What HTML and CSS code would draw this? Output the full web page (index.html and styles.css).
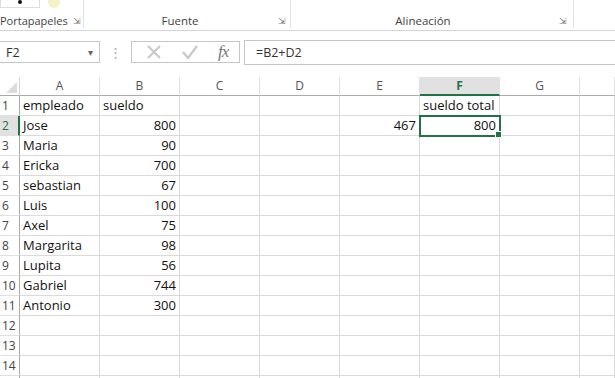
FILE: index.html
```html
<!DOCTYPE html>
<html lang="es">
<head>
    <meta charset="UTF-8">
    <title>Libro1 - Excel</title>
    <link rel="stylesheet" href="styles.css">
</head>
<body>
    <div class="ribbon">
        <div class="group clip">
            <div class="tools">
                <span class="paste"><span class="dot"></span></span>
                <span class="brush"></span>
            </div>
            <div class="label">Portapapeles <span class="launch">&#8690;</span></div>
        </div>
        <div class="group font">
            <div class="tools"></div>
            <div class="label">Fuente <span class="launch">&#8690;</span></div>
        </div>
        <div class="group align">
            <div class="tools"></div>
            <div class="label">Alineación <span class="launch">&#8690;</span></div>
        </div>
        <div class="group rest"></div>
    </div>

    <div class="formula-bar">
        <div class="name-box">F2 <span class="caret">&#9662;</span></div>
        <div class="grip">&#8942;</div>
        <div class="fx-box">
            <svg width="18" height="18" viewBox="0 0 18 18"><path d="M3 3 L15 15 M15 3 L3 15" stroke="#c8c8c8" stroke-width="2" fill="none"/></svg>
            <svg width="20" height="18" viewBox="0 0 20 18"><path d="M3 9 L8 15 L17 3" stroke="#c8c8c8" stroke-width="2.2" fill="none"/></svg>
            <span class="fx">fx</span>
        </div>
        <div class="formula">=B2+D2</div>
    </div>

    <div class="sheet">
        <div class="corner"><span class="tri"></span></div>
        <div class="colh">A</div>
        <div class="colh">B</div>
        <div class="colh">C</div>
        <div class="colh">D</div>
        <div class="colh">E</div>
        <div class="colh active">F</div>
        <div class="colh">G</div>
        <div class="colh"></div>

        <div class="rowh">1</div><div class="c">empleado</div><div class="c">sueldo</div><div class="c"></div><div class="c"></div><div class="c"></div><div class="c">sueldo total</div><div class="c"></div><div class="c"></div>
        <div class="rowh active">2</div><div class="c">Jose</div><div class="c n">800</div><div class="c"></div><div class="c"></div><div class="c n">467</div><div class="c n sel">800<span class="handle"></span></div><div class="c"></div><div class="c"></div>
        <div class="rowh">3</div><div class="c">Maria</div><div class="c n">90</div><div class="c"></div><div class="c"></div><div class="c"></div><div class="c"></div><div class="c"></div><div class="c"></div>
        <div class="rowh">4</div><div class="c">Ericka</div><div class="c n">700</div><div class="c"></div><div class="c"></div><div class="c"></div><div class="c"></div><div class="c"></div><div class="c"></div>
        <div class="rowh">5</div><div class="c">sebastian</div><div class="c n">67</div><div class="c"></div><div class="c"></div><div class="c"></div><div class="c"></div><div class="c"></div><div class="c"></div>
        <div class="rowh">6</div><div class="c">Luis</div><div class="c n">100</div><div class="c"></div><div class="c"></div><div class="c"></div><div class="c"></div><div class="c"></div><div class="c"></div>
        <div class="rowh">7</div><div class="c">Axel</div><div class="c n">75</div><div class="c"></div><div class="c"></div><div class="c"></div><div class="c"></div><div class="c"></div><div class="c"></div>
        <div class="rowh">8</div><div class="c">Margarita</div><div class="c n">98</div><div class="c"></div><div class="c"></div><div class="c"></div><div class="c"></div><div class="c"></div><div class="c"></div>
        <div class="rowh">9</div><div class="c">Lupita</div><div class="c n">56</div><div class="c"></div><div class="c"></div><div class="c"></div><div class="c"></div><div class="c"></div><div class="c"></div>
        <div class="rowh">10</div><div class="c">Gabriel</div><div class="c n">744</div><div class="c"></div><div class="c"></div><div class="c"></div><div class="c"></div><div class="c"></div><div class="c"></div>
        <div class="rowh">11</div><div class="c">Antonio</div><div class="c n">300</div><div class="c"></div><div class="c"></div><div class="c"></div><div class="c"></div><div class="c"></div><div class="c"></div>
        <div class="rowh">12</div><div class="c"></div><div class="c"></div><div class="c"></div><div class="c"></div><div class="c"></div><div class="c"></div><div class="c"></div><div class="c"></div>
        <div class="rowh">13</div><div class="c"></div><div class="c"></div><div class="c"></div><div class="c"></div><div class="c"></div><div class="c"></div><div class="c"></div><div class="c"></div>
        <div class="rowh">14</div><div class="c"></div><div class="c"></div><div class="c"></div><div class="c"></div><div class="c"></div><div class="c"></div><div class="c"></div><div class="c"></div>
        <div class="rowh"></div><div class="c"></div><div class="c"></div><div class="c"></div><div class="c"></div><div class="c"></div><div class="c"></div><div class="c"></div><div class="c"></div>
    </div>
</body>
</html>
```

FILE: styles.css
```css
body {
    margin: 0;
    width: 615px;
    height: 378px;
    overflow: hidden;
    background: #fff;
    font-family: "Open Sans", "Noto Sans", sans-serif;
    color: #222;
}

/* ribbon */
.ribbon {
    display: flex;
    height: 30px;
    border-bottom: 1px solid #d4d4d4;
}
.group {
    display: flex;
    flex-direction: column;
    border-right: 1px solid #e1e1e1;
    height: 28px;
}
.group .tools { height: 12px; flex: none; display: flex; gap: 8px; }
.group .label {
    font-size: 11.5px;
    color: #444;
    line-height: 17px;
    text-align: center;
    position: relative;
}
.launch {
    position: absolute;
    right: 4px;
    top: 0;
    font-size: 9px;
    color: #777;
}
.clip { width: 83px; }
.clip .label { text-align: left; font-size: 11px; }
.clip .launch { right: 2px; }
.font { width: 206px; }
.font .label { padding-right: 14px; }
.align { width: 282px; }
.align .label { padding-right: 18px; }
.align .launch { right: 6px; }
.rest { flex: 1; border-right: none; }

.paste {
    width: 38px;
    height: 7px;
    border: 1px solid #ddd;
    border-top: none;
    display: flex;
    justify-content: center;
}
.paste .dot {
    width: 4px;
    height: 4px;
    border-radius: 2px;
    background: #111;
}
.brush {
    width: 12px;
    height: 8px;
    background: #f6f2c8;
    border-radius: 0 0 6px 6px;
}

/* formula bar */
.formula-bar {
    display: flex;
    align-items: center;
    height: 24px;
    margin-top: 9px;
    font-size: 12.5px;
    color: #333;
}
.name-box {
    width: 100px;
    height: 22px;
    border: 1px solid #c6c6c6;
    border-left: none;
    display: flex;
    align-items: center;
    justify-content: space-between;
    padding: 0 6px;
    box-sizing: border-box;
}
.caret { font-size: 10px; color: #666; }
.grip {
    width: 31px;
    text-align: center;
    color: #aaa;
    font-size: 13px;
}
.fx-box {
    width: 109px;
    height: 22px;
    border: 1px solid #c6c6c6;
    box-sizing: border-box;
    display: flex;
    align-items: center;
    justify-content: space-around;
    padding: 0 2px 0 4px;
}
.fx {
    font-family: "Liberation Serif", serif;
    font-style: italic;
    font-size: 17px;
    color: #777;
    letter-spacing: -1px;
}
.formula {
    flex: 1;
    height: 25px;
    margin-left: 4px;
    border: 1px solid #c6c6c6;
    border-right: none;
    box-sizing: border-box;
    padding-left: 11px;
    line-height: 23px;
}

/* sheet */
.sheet {
    display: grid;
    grid-template-columns: 20px repeat(7, 80px) 1fr;
    grid-template-rows: 19px;
    grid-auto-rows: 20px;
    margin-top: 13px;
    font-size: 13px;
}
.corner {
    border-right: 1px solid #d4d4d4;
    border-bottom: 1px solid #ababab;
    position: relative;
}
.tri {
    position: absolute;
    right: 2px;
    bottom: 2px;
    width: 0;
    height: 0;
    border-left: 11px solid transparent;
    border-bottom: 11px solid #dcdcdc;
}
.colh {
    border-right: 1px solid #e1e1e1;
    border-bottom: 1px solid #ababab;
    text-align: center;
    color: #555;
    font-size: 12px;
    line-height: 18px;
}
.colh.active {
    background: #e1e1e1;
    border-bottom: 2px solid #217346;
    color: #217346;
    font-weight: bold;
    line-height: 17px;
}
.rowh {
    border-right: 1px solid #ababab;
    border-bottom: 1px solid #e1e1e1;
    color: #444;
    font-size: 12px;
    line-height: 19px;
    padding-left: 2px;
}
.rowh.active {
    background: #e1e1e1;
    color: #217346;
    border-right: 2px solid #217346;
}
.c {
    border-right: 1px solid #dadada;
    border-bottom: 1px solid #dadada;
    line-height: 19px;
    padding: 0 3px;
    white-space: nowrap;
    color: #111;
    position: relative;
}
.c.n { text-align: right; }
.c.sel {
    outline: 2px solid #217346;
    outline-offset: -1px;
    z-index: 1;
}
.handle {
    position: absolute;
    right: -3px;
    bottom: -3px;
    width: 5px;
    height: 5px;
    background: #217346;
    border: 1px solid #fff;
}
```
